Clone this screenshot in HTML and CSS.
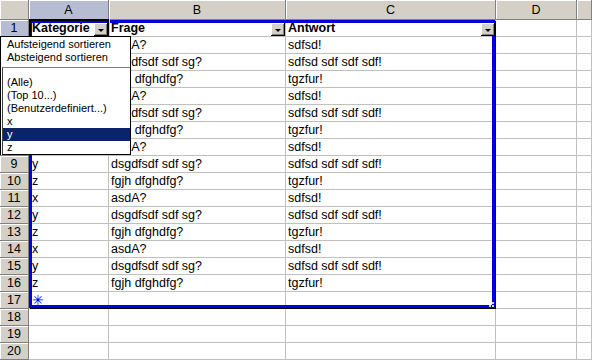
FILE: index.html
```html
<!DOCTYPE html>
<html>
<head>
  <title>Liste - AutoFilter</title>
  <link rel="stylesheet" href="styles.css">
</head>
<body>
  <div class="sheet">
    <div class="grid">
      <div class="corner"></div>
      <div class="colhead sel">A</div>
      <div class="colhead">B</div>
      <div class="colhead">C</div>
      <div class="colhead">D</div>
      <div class="colhead"></div>

      <div class="rowhead sel">1</div>
      <div class="cell a head">Kategorie<span class="drop"></span></div>
      <div class="cell head">Frage<span class="drop"></span></div>
      <div class="cell head">Antwort<span class="drop"></span></div>
      <div class="cell"></div><div class="cell"></div>

      <div class="rowhead">2</div>
      <div class="cell a">x</div><div class="cell">asdA?</div><div class="cell">sdfsd!</div><div class="cell"></div><div class="cell"></div>
      <div class="rowhead">3</div>
      <div class="cell a">y</div><div class="cell">dsgdfsdf sdf sg?</div><div class="cell">sdfsd sdf sdf sdf!</div><div class="cell"></div><div class="cell"></div>
      <div class="rowhead">4</div>
      <div class="cell a">z</div><div class="cell">fgjh dfghdfg?</div><div class="cell">tgzfur!</div><div class="cell"></div><div class="cell"></div>
      <div class="rowhead">5</div>
      <div class="cell a">x</div><div class="cell">asdA?</div><div class="cell">sdfsd!</div><div class="cell"></div><div class="cell"></div>
      <div class="rowhead">6</div>
      <div class="cell a">y</div><div class="cell">dsgdfsdf sdf sg?</div><div class="cell">sdfsd sdf sdf sdf!</div><div class="cell"></div><div class="cell"></div>
      <div class="rowhead">7</div>
      <div class="cell a">z</div><div class="cell">fgjh dfghdfg?</div><div class="cell">tgzfur!</div><div class="cell"></div><div class="cell"></div>
      <div class="rowhead">8</div>
      <div class="cell a">x</div><div class="cell">asdA?</div><div class="cell">sdfsd!</div><div class="cell"></div><div class="cell"></div>
      <div class="rowhead">9</div>
      <div class="cell a">y</div><div class="cell">dsgdfsdf sdf sg?</div><div class="cell">sdfsd sdf sdf sdf!</div><div class="cell"></div><div class="cell"></div>
      <div class="rowhead">10</div>
      <div class="cell a">z</div><div class="cell">fgjh dfghdfg?</div><div class="cell">tgzfur!</div><div class="cell"></div><div class="cell"></div>
      <div class="rowhead">11</div>
      <div class="cell a">x</div><div class="cell">asdA?</div><div class="cell">sdfsd!</div><div class="cell"></div><div class="cell"></div>
      <div class="rowhead">12</div>
      <div class="cell a">y</div><div class="cell">dsgdfsdf sdf sg?</div><div class="cell">sdfsd sdf sdf sdf!</div><div class="cell"></div><div class="cell"></div>
      <div class="rowhead">13</div>
      <div class="cell a">z</div><div class="cell">fgjh dfghdfg?</div><div class="cell">tgzfur!</div><div class="cell"></div><div class="cell"></div>
      <div class="rowhead">14</div>
      <div class="cell a">x</div><div class="cell">asdA?</div><div class="cell">sdfsd!</div><div class="cell"></div><div class="cell"></div>
      <div class="rowhead">15</div>
      <div class="cell a">y</div><div class="cell">dsgdfsdf sdf sg?</div><div class="cell">sdfsd sdf sdf sdf!</div><div class="cell"></div><div class="cell"></div>
      <div class="rowhead">16</div>
      <div class="cell a">z</div><div class="cell">fgjh dfghdfg?</div><div class="cell">tgzfur!</div><div class="cell"></div><div class="cell"></div>
      <div class="rowhead">17</div>
      <div class="cell a"><span class="newrow">✳</span></div><div class="cell"></div><div class="cell"></div><div class="cell"></div><div class="cell"></div>
      <div class="rowhead">18</div>
      <div class="cell"></div><div class="cell"></div><div class="cell"></div><div class="cell"></div><div class="cell"></div>
      <div class="rowhead">19</div>
      <div class="cell"></div><div class="cell"></div><div class="cell"></div><div class="cell"></div><div class="cell"></div>
      <div class="rowhead">20</div>
      <div class="cell"></div><div class="cell"></div><div class="cell"></div><div class="cell"></div><div class="cell"></div>
    </div>

    <div class="list-frame"><span class="handle"></span></div>
    <div class="active-cell"></div>

    <div class="filter-menu">
      <div class="sort-item">Aufsteigend sortieren</div>
      <div class="sort-item">Absteigend sortieren</div>
      <div class="filter-list">
        <div class="item">(Alle)</div>
        <div class="item">(Top 10...)</div>
        <div class="item">(Benutzerdefiniert...)</div>
        <div class="item">x</div>
        <div class="item selected">y</div>
        <div class="item">z</div>
      </div>
    </div>
  </div>
</body>
</html>
```

FILE: styles.css
```css
body {
  margin: 0;
  padding: 0;
  background-color: #fff;
  font-family: "Liberation Sans", Arial, sans-serif;
}
.sheet {
  position: relative;
  width: 592px;
  height: 360px;
  overflow: hidden;
}
.grid {
  display: grid;
  grid-template-columns: 29px 80px 177px 210px 81px 1fr;
  grid-template-rows: 20px repeat(20, 17px);
}
.corner, .colhead, .rowhead {
  background-color: #d4d0c8;
  border-right: 1px solid #808080;
  border-bottom: 1px solid #808080;
  box-shadow: inset 1px 1px 0 #fff;
  box-sizing: border-box;
  display: flex;
  align-items: center;
  justify-content: center;
  font-size: 12.5px;
  color: #000;
}
.colhead.sel, .rowhead.sel {
  background-color: #b6bdd2;
}
.cell {
  position: relative;
  display: flex;
  align-items: center;
  padding-left: 2px;
  border-right: 1px solid #c0c0c0;
  border-bottom: 1px solid #c0c0c0;
  box-sizing: border-box;
  font-size: 12.5px;
  white-space: nowrap;
  overflow: hidden;
}
.cell.a {
  padding-left: 3px;
}
.cell.head {
  font-weight: bold;
  overflow: visible;
}
.drop {
  position: relative;
  z-index: 3;
  margin-left: auto;
  align-self: flex-end;
  width: 14px;
  height: 13px;
  box-sizing: border-box;
  background-color: #d4d0c8;
  border-right: 1px solid #000;
  border-bottom: 1px solid #000;
  box-shadow: inset 1px 1px 0 #fff, inset -1px -1px 0 #808080;
  display: flex;
  align-items: center;
  justify-content: center;
}
.drop::after {
  content: "";
  width: 0;
  height: 0;
  margin-top: 2px;
  border-left: 3px solid transparent;
  border-right: 3px solid transparent;
  border-top: 3px solid #000;
}
.newrow {
  color: #0000ff;
  font-family: "DejaVu Sans", sans-serif;
  font-size: 14px;
  line-height: 14px;
}
.list-frame {
  position: absolute;
  z-index: 1;
  left: 29px;
  top: 20px;
  width: 466px;
  height: 288px;
  box-sizing: border-box;
  border: 3px solid #0000e0;
  box-shadow: 1px 1px 0 #000;
}
.handle {
  position: absolute;
  right: -2px;
  bottom: -2px;
  width: 5px;
  height: 5px;
  background:
    linear-gradient(#d8d4b8, #d8d4b8) 3px 0 / 2px 2px no-repeat,
    linear-gradient(#d8d4b8, #d8d4b8) 0 3px / 2px 2px no-repeat,
    linear-gradient(#d8d4b8, #d8d4b8) 3px 3px / 2px 2px no-repeat;
}
.active-cell {
  position: absolute;
  z-index: 2;
  left: 29px;
  top: 19px;
  width: 80px;
  height: 19px;
  box-sizing: border-box;
  border: 2px solid #000;
  box-shadow: 1px 0 0 #e8e800;
}
.filter-menu {
  position: absolute;
  z-index: 5;
  left: 0;
  top: 36px;
  width: 131px;
  box-sizing: border-box;
  background-color: #fff;
  border: 1px solid #000;
  border-bottom: none;
  padding: 1px 0 0 1px;
  font-size: 11px;
  color: #000;
}
.sort-item {
  height: 13px;
  line-height: 13px;
  padding-left: 5px;
  white-space: nowrap;
}
.filter-list {
  margin-top: 3px;
  padding-top: 8px;
  border-top: 1px solid #808080;
  border-left: 1px solid #404040;
  border-bottom: 1px solid #000;
}
.item {
  height: 13px;
  line-height: 13px;
  padding-left: 4px;
  white-space: nowrap;
}
.item.selected {
  background-color: #0a246a;
  color: #fff;
}
```
